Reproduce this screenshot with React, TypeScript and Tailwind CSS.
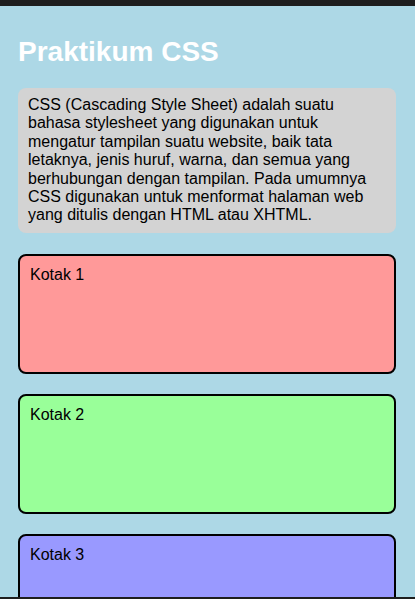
export default function App() {
  const boxes = [
    { label: "Kotak 1", cls: "bg-[#ff9999]" },
    { label: "Kotak 2", cls: "bg-[#99ff99]" },
    { label: "Kotak 3", cls: "bg-[#9999ff]" },
  ];
  return (
    <div className="h-[599px] w-[415px] flex flex-col overflow-hidden bg-[#add8e6]" style={{ fontFamily: '"Liberation Sans", Arial, sans-serif' }}>
      <div className="h-[6px] shrink-0 bg-[#1e1e1e]" />
      <div className="flex-1 overflow-hidden px-[18px] pt-[30px]">
        <h1 className="text-[28px] leading-[32px] font-bold text-white mb-[20px]">Praktikum CSS</h1>
        <div className="w-[378px] bg-[#d3d3d3] rounded-[8px] px-[10px] py-[8px] text-[16px] leading-[18.4px] text-black">
          CSS (Cascading Style Sheet) adalah suatu bahasa stylesheet yang digunakan untuk mengatur tampilan suatu website, baik tata letaknya, jenis huruf, warna, dan semua yang berhubungan dengan tampilan. Pada umumnya CSS digunakan untuk menformat halaman web yang ditulis dengan HTML atau XHTML.
        </div>
        <div className="flex flex-col gap-[20px] mt-[21px]">
          {boxes.map((b) => (
            <div key={b.label} className={`w-[378px] h-[120px] shrink-0 border-2 border-black rounded-[8px] p-[10px] text-[16px] leading-[18.4px] text-black ${b.cls}`}>
              {b.label}
            </div>
          ))}
        </div>
      </div>
      <div className="h-[2px] shrink-0 bg-[#1e1e1e]" />
    </div>
  );
}
